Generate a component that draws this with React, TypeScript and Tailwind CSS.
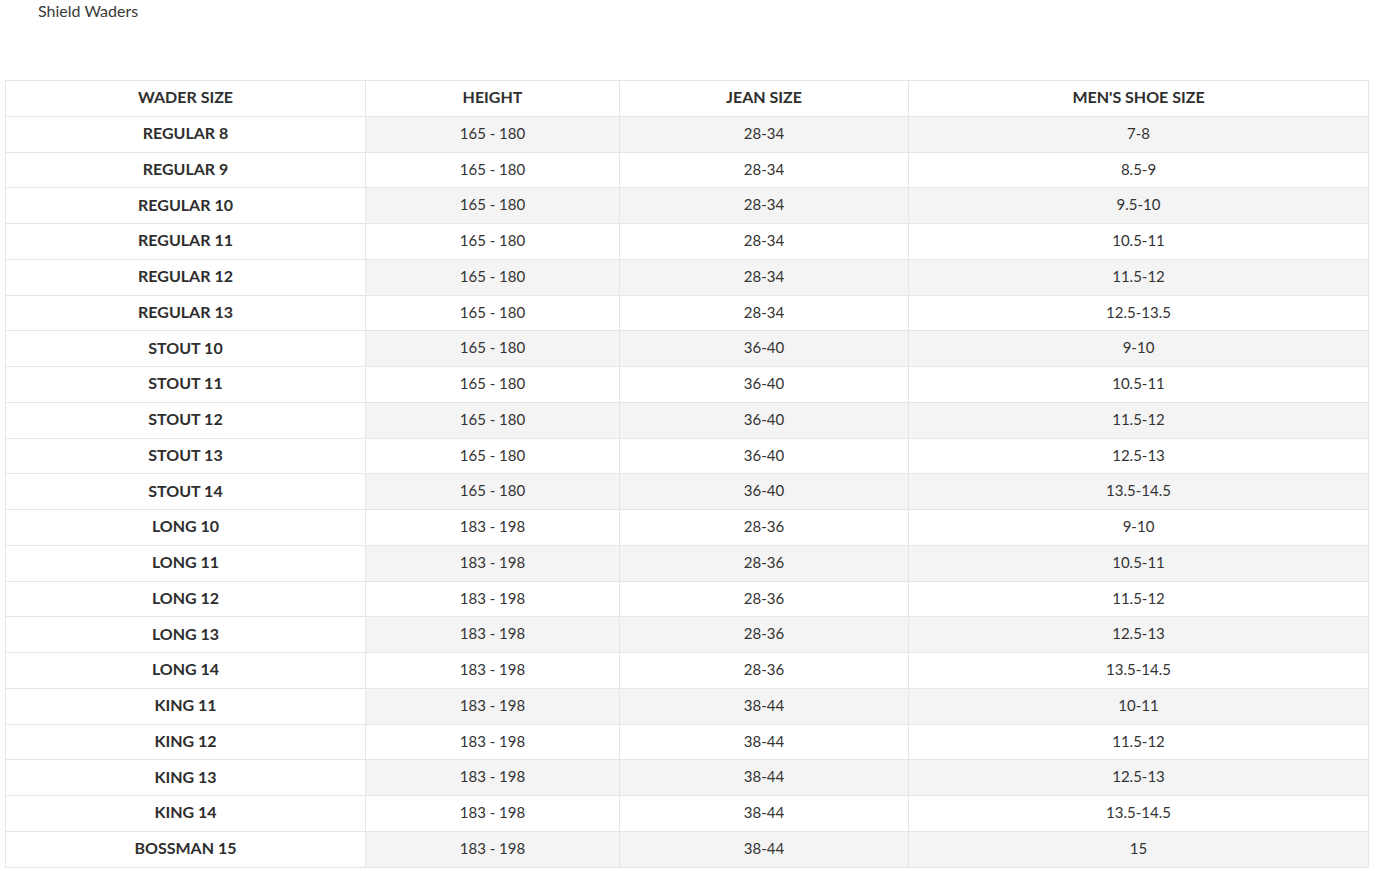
import React from "react";

const rows: [string, string, string, string][] = [
  ["REGULAR 8", "165 - 180", "28-34", "7-8"],
  ["REGULAR 9", "165 - 180", "28-34", "8.5-9"],
  ["REGULAR 10", "165 - 180", "28-34", "9.5-10"],
  ["REGULAR 11", "165 - 180", "28-34", "10.5-11"],
  ["REGULAR 12", "165 - 180", "28-34", "11.5-12"],
  ["REGULAR 13", "165 - 180", "28-34", "12.5-13.5"],
  ["STOUT 10", "165 - 180", "36-40", "9-10"],
  ["STOUT 11", "165 - 180", "36-40", "10.5-11"],
  ["STOUT 12", "165 - 180", "36-40", "11.5-12"],
  ["STOUT 13", "165 - 180", "36-40", "12.5-13"],
  ["STOUT 14", "165 - 180", "36-40", "13.5-14.5"],
  ["LONG 10", "183 - 198", "28-36", "9-10"],
  ["LONG 11", "183 - 198", "28-36", "10.5-11"],
  ["LONG 12", "183 - 198", "28-36", "11.5-12"],
  ["LONG 13", "183 - 198", "28-36", "12.5-13"],
  ["LONG 14", "183 - 198", "28-36", "13.5-14.5"],
  ["KING 11", "183 - 198", "38-44", "10-11"],
  ["KING 12", "183 - 198", "38-44", "11.5-12"],
  ["KING 13", "183 - 198", "38-44", "12.5-13"],
  ["KING 14", "183 - 198", "38-44", "13.5-14.5"],
  ["BOSSMAN 15", "183 - 198", "38-44", "15"],
];

export default function App() {
  return (
    <div
      className="bg-white min-h-[871px] text-[#333333]"
      style={{ fontFamily: "Lato, 'Liberation Sans', sans-serif" }}
    >
      <div className="pl-[38px] pt-[2px] text-[16px] leading-[18px] text-[#3a3a3a]">Shield Waders</div>
      <div className="pl-[5px] pt-[60px]">
        <table className="border-collapse w-[1363px] text-[15px] table-fixed">
          <colgroup>
            <col className="w-[360px]" />
            <col className="w-[254px]" />
            <col className="w-[289px]" />
            <col className="w-[460px]" />
          </colgroup>
          <thead>
            <tr className="h-[35.75px]">
              {["WADER SIZE", "HEIGHT", "JEAN SIZE", "MEN'S SHOE SIZE"].map((h) => (
                <th key={h} className="border border-[#e6e6e6] font-bold text-[16px] text-center px-0 pt-0 pb-[2px] text-[#2e2e2e]">
                  {h}
                </th>
              ))}
            </tr>
          </thead>
          <tbody>
            {rows.map((r, i) => {
              const bg = i % 2 === 0 ? "bg-[#f4f4f4]" : "bg-white";
              return (
                <tr key={r[0]} className="h-[35.75px]">
                  <th className="border border-[#e6e6e6] font-bold text-[16px] text-center px-0 pt-0 pb-[2px] bg-white text-[#2e2e2e]">{r[0]}</th>
                  <td className={`border border-[#e6e6e6] text-center px-0 pt-0 pb-[2px] ${bg}`}>{r[1]}</td>
                  <td className={`border border-[#e6e6e6] text-center px-0 pt-0 pb-[2px] ${bg}`}>{r[2]}</td>
                  <td className={`border border-[#e6e6e6] text-center px-0 pt-0 pb-[2px] ${bg}`}>{r[3]}</td>
                </tr>
              );
            })}
          </tbody>
        </table>
      </div>
    </div>
  );
}
